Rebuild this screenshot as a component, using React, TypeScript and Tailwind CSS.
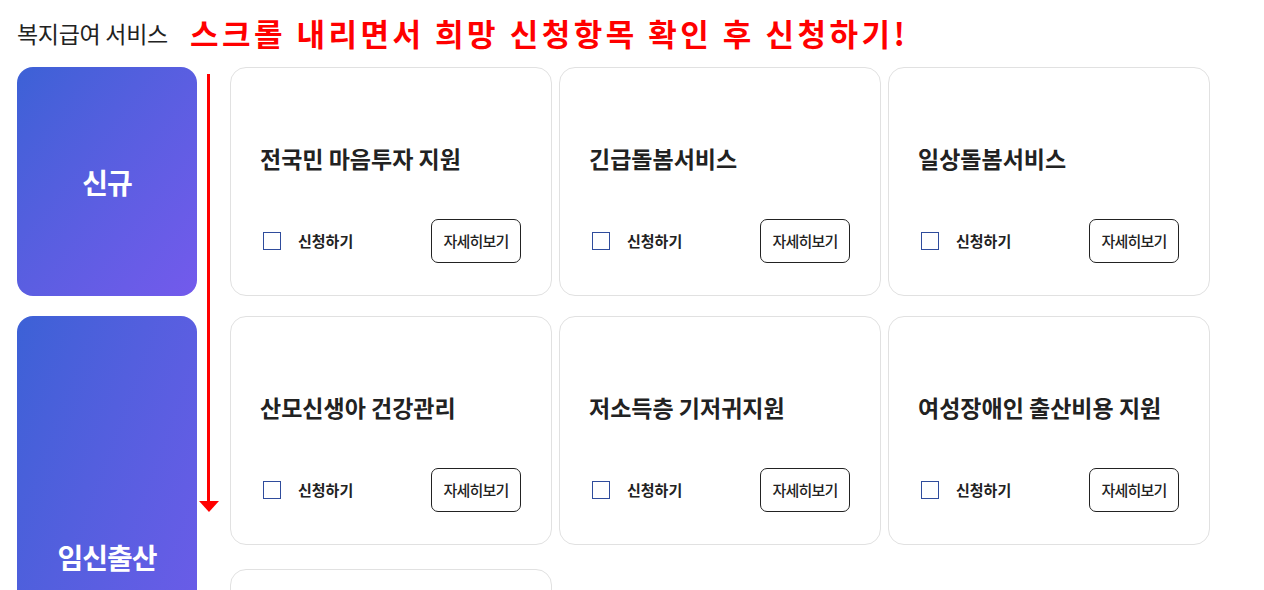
import React from 'react'

type Group = {
  label: string
  items: string[]
}

const groups: Group[] = [
  { label: '신규', items: ['전국민 마음투자 지원', '긴급돌봄서비스', '일상돌봄서비스'] },
  {
    label: '임신출산',
    items: ['산모신생아 건강관리', '저소득층 기저귀지원', '여성장애인 출산비용 지원', '첫만남이용권'],
  },
]

const font = { fontFamily: '"Noto Sans CJK KR", "Noto Sans", sans-serif' }

function ServiceCard({ title }: { title: string }) {
  return (
    <div className="box-border h-[229px] w-[322px] rounded-[16px] border border-[#e1e1e1] bg-white px-[29px] pt-[75px]">
      <div className="h-[30px] text-[23px] leading-[30px] font-bold text-[#222]">{title}</div>
      <div className="mt-[46px] flex h-[44px] items-center justify-between pr-[1px]">
        <label className="flex items-center">
          <span className="ml-[3px] block h-[18px] w-[18px] border border-[#2f4c9c] bg-white" />
          <span className="ml-[17px] text-[15px] font-semibold text-[#222]">신청하기</span>
        </label>
        <button className="box-border h-[44px] w-[90px] rounded-[7px] border border-[#222] bg-white text-[15px] font-medium tracking-[-0.8px] text-[#222]">
          자세히보기
        </button>
      </div>
    </div>
  )
}

function CategoryGroup({ group }: { group: Group }) {
  return (
    <div className="flex">
      <div className="flex w-[180px] shrink-0 items-center justify-center rounded-[16px] bg-gradient-to-br from-[#3c61d6] to-[#735aec]">
        <span className="text-[28px] font-bold tracking-[-1px] text-white">{group.label}</span>
      </div>
      <div className="ml-[33px] grid grid-cols-[322px_322px_322px] gap-x-[7px] gap-y-[24px]">
        {group.items.map((item) => (
          <ServiceCard key={item} title={item} />
        ))}
      </div>
    </div>
  )
}

export default function App() {
  return (
    <div className="relative min-h-[590px] bg-white pl-[17px]" style={font}>
      <header className="flex h-[67px] items-center pb-[1px]">
        <h1 className="text-[23px] font-normal tracking-[-0.3px] text-[#222]">복지급여 서비스</h1>
        <p className="ml-[22px] text-[31px] font-bold tracking-[3.5px] text-[#ff0000]">
          스크롤 내리면서 희망 신청항목 확인 후 신청하기!
        </p>
      </header>

      <div className="flex flex-col gap-[20px]">
        {groups.map((group) => (
          <CategoryGroup key={group.label} group={group} />
        ))}
      </div>

      {/* scroll hint arrow */}
      <svg className="absolute left-[199px] top-[74px]" width="20" height="439" viewBox="0 0 20 439">
        <rect x="8" y="0" width="3" height="428" fill="#ff0000" />
        <polygon points="0,427 20,427 10,438" fill="#ff0000" />
      </svg>
    </div>
  )
}
